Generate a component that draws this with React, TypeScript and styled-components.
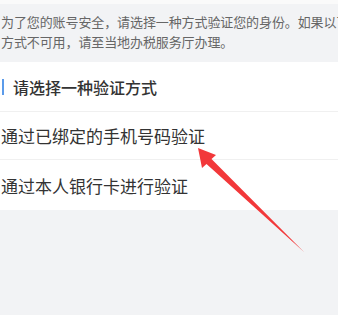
import React from 'react';
import styled, { createGlobalStyle } from 'styled-components';

const GlobalStyle = createGlobalStyle`
    html, body {
        margin: 0;
        padding: 0;
        background: #f2f3f5;
    }
    body {
        font-family: "Noto Sans CJK SC", "Noto Sans", sans-serif;
    }
`;

const Page = styled.div`
    position: relative;
    width: 338px;
    height: 315px;
    overflow: hidden;
    background: #f2f3f5;
    border-top: 4px solid #fafafa;
    box-sizing: border-box;
`;

const Notice = styled.div`
    padding: 8px 0 10px 1px;
    font-size: 13px;
    line-height: 20px;
    color: #666;
    white-space: nowrap;
    letter-spacing: -0.1px;
`;

const Panel = styled.div`
    background: #fff;
`;

const PanelHeader = styled.div`
    display: flex;
    align-items: center;
    gap: 9px;
    height: 50px;
    padding-left: 2px;
    border-bottom: 1px solid #f0f0f0;
    box-sizing: border-box;
    font-size: 16px;
    font-weight: 500;
    color: #333;
`;

const Bar = styled.span`
    width: 2px;
    height: 16px;
    background: #5b9bea;
`;

const Option = styled.div<{ $last?: boolean }>`
    display: flex;
    align-items: center;
    height: ${p => (p.$last ? '50px' : '48px')};
    padding-left: 1px;
    border-bottom: ${p => (p.$last ? 'none' : '1px solid #f0f0f0')};
    box-sizing: border-box;
    font-size: 17px;
    color: #333;
`;

const Overlay = styled.svg`
    position: absolute;
    left: 0;
    top: -4px;
    pointer-events: none;
`;

const Arrow: React.FC = () => (
    <Overlay width="338" height="315" viewBox="0 0 338 315">
        <polygon
            points="198,148 216,155 211.5,159 304,252 206.5,164 202,168"
            fill="#f2383a"
        />
    </Overlay>
);

const App: React.FC = () => {
    return (
        <>
            <GlobalStyle />
            <Page>
                <Notice>
                    为了您的账号安全，请选择一种方式验证您的身份。如果以下
                    <br />
                    方式不可用，请至当地办税服务厅办理。
                </Notice>
                <Panel>
                    <PanelHeader>
                        <Bar />
                        请选择一种验证方式
                    </PanelHeader>
                    <Option>通过已绑定的手机号码验证</Option>
                    <Option $last>通过本人银行卡进行验证</Option>
                </Panel>
                <Arrow />
            </Page>
        </>
    );
};

export default App;
